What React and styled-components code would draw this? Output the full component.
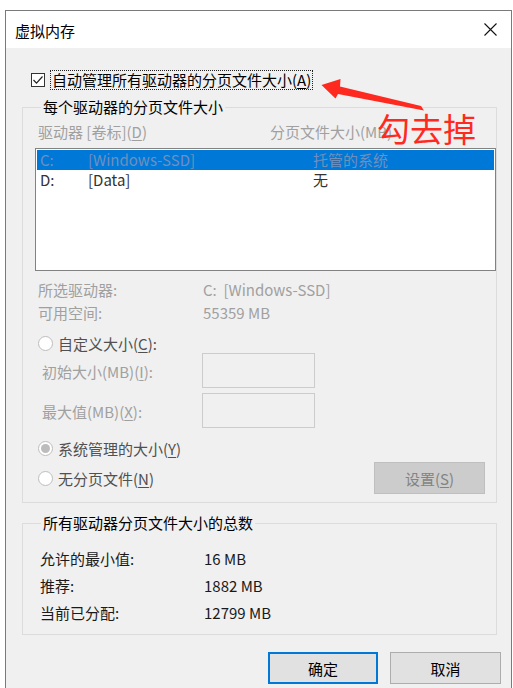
import React from 'react';
import styled, { createGlobalStyle } from 'styled-components';

const GlobalStyle = createGlobalStyle`
  html, body {
    margin: 0;
    padding: 0;
    background: #ffffff;
    overflow: hidden;
  }
  body {
    font-family: "Noto Sans CJK SC", "Noto Sans", sans-serif;
    font-size: 15px;
    color: #000;
  }
`;

const Screen = styled.div`
  position: relative;
  width: 513px;
  height: 688px;
  padding: 10px 0 0 5px;
  box-sizing: border-box;
  overflow: hidden;
`;

const Window = styled.div`
  width: 507px;
  height: 700px;
  box-sizing: border-box;
  border: 1px solid #7a7a7a;
  background: #f0f0f0;
`;

const TitleBar = styled.div`
  height: 37px;
  background: #ffffff;
  display: flex;
  align-items: center;
  justify-content: space-between;
  padding: 0 14px 0 9px;
`;

const Title = styled.div`
  font-size: 15px;
  line-height: 20px;
  color: #000;
  margin-top: 2px;
`;

const Body = styled.div`
  padding: 0 14px 0 16px;
`;

const CheckRow = styled.div`
  display: flex;
  align-items: center;
  height: 20px;
  margin-top: 22px;
  padding-left: 9px;
`;

const CheckBox = styled.div`
  width: 14px;
  height: 14px;
  box-sizing: border-box;
  border: 1px solid #333;
  background: #fff;
  display: flex;
  align-items: center;
  justify-content: center;
`;

const FocusLabel = styled.span`
  margin-left: 5px;
  padding: 0 1px;
  border: 1px dotted #222;
  line-height: 18px;
  color: #000;
`;

const Group = styled.fieldset`
  margin: ${(p) => p.$top}px 0 0 0;
  padding: 0 0 8px 12px;
  border: 1px solid #dcdcdc;
  min-width: 0;
`;

const Legend = styled.legend`
  margin-left: 6px;
  padding: 0 2px;
  line-height: 20px;
  color: #000;
`;

const HeaderRow = styled.div`
  display: flex;
  height: 20px;
  line-height: 20px;
  margin-top: 5px;
  padding-left: 3px;
  color: #a0a0a0;
  white-space: nowrap;
`;

const HeaderCell = styled.span`
  width: ${(p) => p.$w}px;
  flex-shrink: 0;
`;

const ListBox = styled.div`
  margin-top: 6px;
  width: 461px;
  height: 123px;
  box-sizing: border-box;
  border: 1px solid #828282;
  background: #fff;
  padding: 1px;
`;

const ListRow = styled.div`
  display: flex;
  height: 20px;
  line-height: 20px;
  padding-left: 3px;
  background: ${(p) => (p.$selected ? '#0078d7' : 'transparent')};
  color: ${(p) => (p.$selected ? '#6f90bd' : '#333')};
  white-space: nowrap;
`;

const ListCell = styled.span`
  width: ${(p) => p.$w}px;
  flex-shrink: 0;
`;

const InfoRow = styled.div`
  display: flex;
  height: 23px;
  line-height: 23px;
  padding-left: 3px;
  color: #a0a0a0;
  margin-top: ${(p) => p.$top || 0}px;
  white-space: nowrap;
`;

const InfoLabel = styled.span`
  width: ${(p) => p.$w}px;
  flex-shrink: 0;
`;

const RadioRow = styled.div`
  display: flex;
  align-items: center;
  height: ${(p) => p.$h || 20}px;
  margin-top: ${(p) => p.$top || 0}px;
  padding-left: 3px;
  color: #505050;
  white-space: nowrap;
`;

const Radio = styled.span`
  width: 15px;
  height: 15px;
  box-sizing: border-box;
  border-radius: 50%;
  border: 1px solid #bdbdbd;
  background: #fff;
  display: flex;
  align-items: center;
  justify-content: center;
  margin-right: 5px;
  flex-shrink: 0;

  &::after {
    content: '';
    display: ${(p) => (p.$checked ? 'block' : 'none')};
    width: 9px;
    height: 9px;
    border-radius: 50%;
    background: #bcbcbc;
  }
`;

const SizeRow = styled.div`
  display: flex;
  align-items: center;
  height: 35px;
  margin-top: ${(p) => p.$top || 0}px;
  padding-left: 7px;
  color: #a0a0a0;
  white-space: nowrap;
`;

const SizeLabel = styled.span`
  width: 160px;
  flex-shrink: 0;
  margin-top: 2px;
`;

const SizeInput = styled.div`
  width: 113px;
  height: 35px;
  box-sizing: border-box;
  border: 1px solid #cccccc;
  background: #f0f0f0;
`;

const LastRow = styled.div`
  display: flex;
  align-items: center;
  justify-content: space-between;
  height: 32px;
  margin-top: 4px;
  padding-right: 11px;
`;

const DisabledButton = styled.div`
  width: 111px;
  height: 32px;
  box-sizing: border-box;
  border: 1px solid #bfbfbf;
  background: #cccccc;
  color: #838383;
  display: flex;
  align-items: center;
  justify-content: center;
`;

const TotalRow = styled.div`
  display: flex;
  height: 27px;
  line-height: 27px;
  padding-left: 5px;
  margin-top: ${(p) => p.$top || 0}px;
  color: #1a1a1a;
  white-space: nowrap;
`;

const TotalLabel = styled.span`
  width: 164px;
  flex-shrink: 0;
`;

const ButtonRow = styled.div`
  display: flex;
  justify-content: flex-end;
  gap: 12px;
  margin-top: 17px;
  margin-right: -4px;
`;

const Button = styled.div`
  width: ${(p) => p.$w}px;
  height: 32px;
  box-sizing: border-box;
  border: ${(p) => (p.$primary ? '2px solid #0078d7' : '1px solid #adadad')};
  background: #e1e1e1;
  color: #000;
  display: flex;
  align-items: center;
  justify-content: center;
`;

const U = styled.span`
  text-decoration: underline;
  text-underline-offset: 2px;
`;

const Arrow = styled.svg`
  position: absolute;
  left: 0;
  top: 0;
  pointer-events: none;
`;

const Note = styled.div`
  position: absolute;
  left: 377px;
  top: 104px;
  font-size: 33px;
  line-height: 48px;
  color: #ff2a1f;
  letter-spacing: 0;
`;

export default function App() {
  return (
    <>
      <GlobalStyle />
      <Screen>
        <Window>
          <TitleBar>
            <Title>虚拟内存</Title>
            <svg width="13" height="13" viewBox="0 0 13 13">
              <path d="M0.5 0.5 L12.5 12.5 M12.5 0.5 L0.5 12.5" stroke="#111" strokeWidth="1.1" />
            </svg>
          </TitleBar>
          <Body>
            <CheckRow>
              <CheckBox>
                <svg width="12" height="12" viewBox="0 0 12 12">
                  <polyline points="1.5,6 4.5,9.2 10.5,2.5" fill="none" stroke="#222" strokeWidth="1.2" />
                </svg>
              </CheckBox>
              <FocusLabel>
                自动管理所有驱动器的分页文件大小(<U>A</U>)
              </FocusLabel>
            </CheckRow>

            <Group $top={7}>
              <Legend>每个驱动器的分页文件大小</Legend>
              <HeaderRow>
                <HeaderCell $w={232}>
                  驱动器 [卷标](<U>D</U>)
                </HeaderCell>
                <HeaderCell $w={140}>分页文件大小(MB)</HeaderCell>
              </HeaderRow>
              <ListBox>
                <ListRow $selected>
                  <ListCell $w={48}>C:</ListCell>
                  <ListCell $w={225}>[Windows-SSD]</ListCell>
                  <ListCell $w={120}>托管的系统</ListCell>
                </ListRow>
                <ListRow>
                  <ListCell $w={48}>D:</ListCell>
                  <ListCell $w={225}>[Data]</ListCell>
                  <ListCell $w={120}>无</ListCell>
                </ListRow>
              </ListBox>

              <InfoRow $top={7}>
                <InfoLabel $w={165}>所选驱动器:</InfoLabel>
                <span>C:&nbsp;&nbsp;[Windows-SSD]</span>
              </InfoRow>
              <InfoRow>
                <InfoLabel $w={165}>可用空间:</InfoLabel>
                <span>55359 MB</span>
              </InfoRow>

              <RadioRow $top={10} $h={19}>
                <Radio />
                <span>
                  自定义大小(<U>C</U>):
                </span>
              </RadioRow>
              <SizeRow>
                <SizeLabel>
                  初始大小(MB)(<U>I</U>):
                </SizeLabel>
                <SizeInput />
              </SizeRow>
              <SizeRow $top={5}>
                <SizeLabel>
                  最大值(MB)(<U>X</U>):
                </SizeLabel>
                <SizeInput />
              </SizeRow>

              <RadioRow $top={10}>
                <Radio $checked />
                <span>
                  系统管理的大小(<U>Y</U>)
                </span>
              </RadioRow>
              <LastRow>
                <RadioRow>
                  <Radio />
                  <span>
                    无分页文件(<U>N</U>)
                  </span>
                </RadioRow>
                <DisabledButton>
                  设置(<U>S</U>)
                </DisabledButton>
              </LastRow>
            </Group>

            <Group $top={10}>
              <Legend>所有驱动器分页文件大小的总数</Legend>
              <TotalRow $top={12}>
                <TotalLabel>允许的最小值:</TotalLabel>
                <span>16 MB</span>
              </TotalRow>
              <TotalRow>
                <TotalLabel>推荐:</TotalLabel>
                <span>1882 MB</span>
              </TotalRow>
              <TotalRow>
                <TotalLabel>当前已分配:</TotalLabel>
                <span>12799 MB</span>
              </TotalRow>
            </Group>

            <ButtonRow>
              <Button $primary $w={110}>确定</Button>
              <Button $w={111}>取消</Button>
            </ButtonRow>
          </Body>
        </Window>

        <Arrow width="513" height="688" viewBox="0 0 513 688">
          <polygon
            points="321.5,85 340.5,79 340,86.5 421,106 424,110.5 338,94 335.5,98.5"
            fill="#ff2a1f"
          />
        </Arrow>
        <Note>勾去掉</Note>
      </Screen>
    </>
  );
}
